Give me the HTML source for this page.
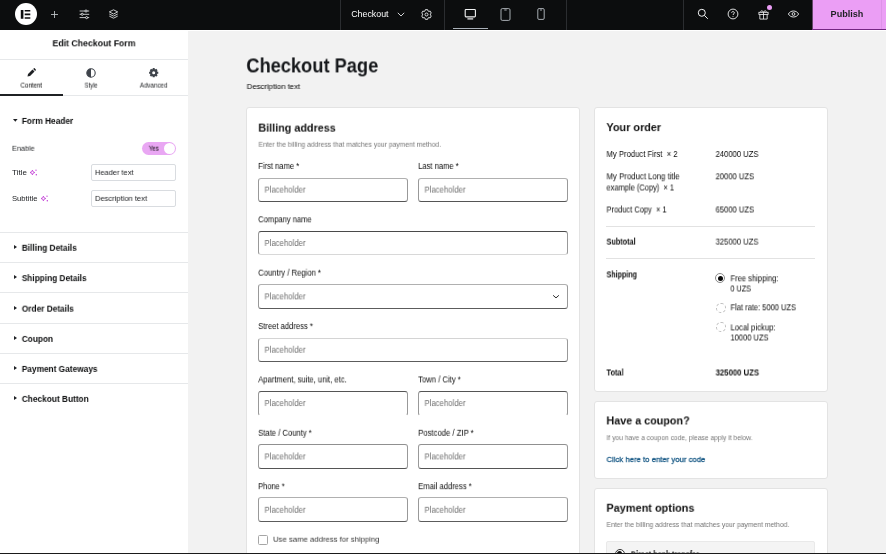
<!DOCTYPE html>
<html><head><meta charset="utf-8"><title>Checkout</title>
<style>
*{box-sizing:border-box;margin:0;padding:0}
html,body{width:886px;height:554px;overflow:hidden;background:#fff;font-family:"Liberation Sans",sans-serif;color:#1f2124}
.abs{position:absolute}
#top{position:absolute;left:0;top:0;width:886px;height:29.5px;background:#0c0d0e}
#panel{position:absolute;left:0;top:29.5px;width:188px;height:523px;background:#fff}
#preview{position:absolute;left:188px;top:30.6px;width:698px;height:522px;background:#f2f2f2}
#bottom{position:absolute;left:0;top:552.5px;width:886px;height:1.5px;background:#1a1a1a}
.t{position:absolute;white-space:nowrap;line-height:1;transform-origin:0 50%;will-change:transform}
.sep{position:absolute;top:0;width:1px;height:29.5px;background:#2b2d30}
.card{position:absolute;background:#fff;border:1px solid #e3e3e3;border-radius:3px}
.inp{position:absolute;border:1px solid #999;border-radius:3px;background:#fff}
.sec{position:absolute;left:0;width:188px;height:1px;background:#e6e8ea}
.hr{position:absolute;height:1px;background:#e2e2e2}
.tri{position:absolute;width:0;height:0;border-top:2.5px solid transparent;border-bottom:2.5px solid transparent;border-left:3px solid #1f2124}
.rad{position:absolute;width:10px;height:10px;border-radius:50%;border:1px solid #9a9a9a;background:#fff}
svg{position:absolute;overflow:visible}
</style></head><body>

<div id="preview"></div><div>
<div class="t" id="t1" style="left:246px;top:55px;font-size:20.30px;color:#15171a;font-weight:bold;transform:translate3d(0.30px,0.40px,0) scaleX(0.9009);">Checkout Page</div>
<div class="t" id="t2" style="left:246px;top:82px;font-size:7.80px;color:#000;transform:translate3d(0.70px,0.98px,0) scaleX(0.9938);">Description text</div>
<div class="card" style="left:246px;top:107.4px;width:334px;height:460px"></div>
<div class="t" id="t3" style="left:258px;top:121px;font-size:11.70px;color:#111;font-weight:bold;transform:translate3d(0.30px,0.62px,0) scaleX(0.9249);">Billing address</div>
<div class="t" id="t4" style="left:258px;top:140px;font-size:7.40px;color:#757575;transform:translate3d(0.50px,0.78px,0) scaleX(0.9164);">Enter the billing address that matches your payment method.</div>
<div class="t" id="t5" style="left:258px;top:161px;font-size:8.60px;color:#0a0a0a;transform:translate3d(0.20px,0.93px,0) scaleX(0.8850);">First name *</div>
<div class="inp" style="left:258px;top:178px;width:150px;height:24px;border-top-color:#b0b0b0;border-bottom-color:#555"></div>
<div class="t" id="t6" style="left:264px;top:185px;font-size:8.40px;color:#6e6e6e;transform:translate3d(0.50px,0.58px,0) scaleX(0.9269);">Placeholder</div>
<div class="t" id="t7" style="left:418px;top:161px;font-size:8.60px;color:#0a0a0a;transform:translate3d(0.20px,0.93px,0) scaleX(0.8828);">Last name *</div>
<div class="inp" style="left:418px;top:178px;width:150px;height:24px;border-top-color:#b0b0b0;border-bottom-color:#555"></div>
<div class="t" id="t8" style="left:424px;top:185px;font-size:8.40px;color:#6e6e6e;transform:translate3d(0.50px,0.58px,0) scaleX(0.9269);">Placeholder</div>
<div class="t" id="t9" style="left:258px;top:215px;font-size:8.60px;color:#0a0a0a;transform:translate3d(0.20px,0.30px,0) scaleX(0.8801);">Company name</div>
<div class="inp" style="left:258px;top:231px;width:310px;height:24px;border-top-color:#4a4a4a;border-bottom-color:#d8d8d8"></div>
<div class="t" id="t10" style="left:264px;top:238px;font-size:8.40px;color:#6e6e6e;transform:translate3d(0.50px,0.95px,0) scaleX(0.9269);">Placeholder</div>
<div class="t" id="t11" style="left:258px;top:268px;font-size:8.60px;color:#0a0a0a;transform:translate3d(0.20px,0.67px,0) scaleX(0.8943);">Country / Region *</div>
<div class="inp" style="left:258px;top:284px;width:310px;height:25px;border-top-color:#b0b0b0;border-bottom-color:#5c5c5c"></div>
<div class="t" id="t12" style="left:264px;top:292px;font-size:8.40px;color:#6e6e6e;transform:translate3d(0.50px,0.32px,0) scaleX(0.9269);">Placeholder</div>
<div class="t" id="t13" style="left:258px;top:322px;font-size:8.60px;color:#0a0a0a;transform:translate3d(0.20px,0.04px,0) scaleX(0.8876);">Street address *</div>
<div class="inp" style="left:258px;top:338px;width:310px;height:24px;border-top-color:#d4d4d4;border-bottom-color:#5c5c5c"></div>
<div class="t" id="t14" style="left:264px;top:345px;font-size:8.40px;color:#6e6e6e;transform:translate3d(0.50px,0.69px,0) scaleX(0.9269);">Placeholder</div>
<div class="t" id="t15" style="left:258px;top:375px;font-size:8.60px;color:#0a0a0a;transform:translate3d(0.20px,0.41px,0) scaleX(0.8864);">Apartment, suite, unit, etc.</div>
<div class="inp" style="left:258px;top:391px;width:150px;height:25px;border-top-color:#555;border-bottom-color:transparent"></div>
<div class="t" id="t16" style="left:264px;top:399px;font-size:8.40px;color:#6e6e6e;transform:translate3d(0.50px,0.06px,0) scaleX(0.9269);">Placeholder</div>
<div class="t" id="t17" style="left:418px;top:375px;font-size:8.60px;color:#0a0a0a;transform:translate3d(0.20px,0.41px,0) scaleX(0.8898);">Town / City *</div>
<div class="inp" style="left:418px;top:391px;width:150px;height:25px;border-top-color:#555;border-bottom-color:transparent"></div>
<div class="t" id="t18" style="left:424px;top:399px;font-size:8.40px;color:#6e6e6e;transform:translate3d(0.50px,0.06px,0) scaleX(0.9269);">Placeholder</div>
<div class="t" id="t19" style="left:258px;top:428px;font-size:8.60px;color:#0a0a0a;transform:translate3d(0.20px,0.78px,0) scaleX(0.8887);">State / County *</div>
<div class="inp" style="left:258px;top:444px;width:150px;height:25px;border-top-color:#909090;border-bottom-color:#555"></div>
<div class="t" id="t20" style="left:264px;top:452px;font-size:8.40px;color:#6e6e6e;transform:translate3d(0.50px,0.43px,0) scaleX(0.9269);">Placeholder</div>
<div class="t" id="t21" style="left:418px;top:428px;font-size:8.60px;color:#0a0a0a;transform:translate3d(0.20px,0.78px,0) scaleX(0.8958);">Postcode / ZIP *</div>
<div class="inp" style="left:418px;top:444px;width:150px;height:25px;border-top-color:#909090;border-bottom-color:#555"></div>
<div class="t" id="t22" style="left:424px;top:452px;font-size:8.40px;color:#6e6e6e;transform:translate3d(0.50px,0.43px,0) scaleX(0.9269);">Placeholder</div>
<div class="t" id="t23" style="left:258px;top:482px;font-size:8.60px;color:#0a0a0a;transform:translate3d(0.20px,0.15px,0) scaleX(0.8662);">Phone *</div>
<div class="inp" style="left:258px;top:497px;width:150px;height:25px;border-top-color:#b0b0b0;border-bottom-color:#5c5c5c"></div>
<div class="t" id="t24" style="left:264px;top:505px;font-size:8.40px;color:#6e6e6e;transform:translate3d(0.50px,0.80px,0) scaleX(0.9269);">Placeholder</div>
<div class="t" id="t25" style="left:418px;top:482px;font-size:8.60px;color:#0a0a0a;transform:translate3d(0.20px,0.15px,0) scaleX(0.8889);">Email address *</div>
<div class="inp" style="left:418px;top:497px;width:150px;height:25px;border-top-color:#b0b0b0;border-bottom-color:#5c5c5c"></div>
<div class="t" id="t26" style="left:424px;top:505px;font-size:8.40px;color:#6e6e6e;transform:translate3d(0.50px,0.80px,0) scaleX(0.9269);">Placeholder</div>
<svg style="left:552px;top:293.8px" width="8" height="6" viewBox="0 0 8 6"><path d="M1.1 1.3 L4 3.9 L6.9 1.3" fill="none" stroke="#222" stroke-width="0.95"/></svg>
<div class="abs" style="left:258px;top:534.8px;width:10px;height:10px;border:1px solid #a6a6a6;border-radius:1.5px;background:#fff"></div>
<div class="t" id="t27" style="left:273px;top:535px;font-size:8.10px;color:#333;transform:translate3d(0.00px,0.73px,0) scaleX(0.9545);">Use same address for shipping</div>
<div class="card" style="left:594px;top:107.4px;width:234px;height:284.2px"></div>
<div class="t" id="t28" style="left:606px;top:121px;font-size:11.70px;color:#111;font-weight:bold;transform:translate3d(0.40px,0.12px,0) scaleX(0.9288);">Your order</div>
<div class="t" id="t29" style="left:606px;top:150px;font-size:8.20px;color:#0a0a0a;transform:translate3d(0.50px,0.98px,0) scaleX(0.9371);">My Product First &nbsp;× 2</div>
<div class="t" id="t30" style="left:715px;top:150px;font-size:8.20px;color:#0a0a0a;transform:translate3d(0.60px,0.98px,0) scaleX(0.9329);">240000 UZS</div>
<div class="t" id="t31" style="left:606px;top:173px;font-size:8.20px;color:#0a0a0a;transform:translate3d(0.50px,0.28px,0) scaleX(0.9516);">My Product Long title</div>
<div class="t" id="t32" style="left:606px;top:184px;font-size:8.20px;color:#0a0a0a;transform:translate3d(0.50px,0.48px,0) scaleX(0.9127);">example (Copy) &nbsp;× 1</div>
<div class="t" id="t33" style="left:715px;top:173px;font-size:8.20px;color:#0a0a0a;transform:translate3d(0.60px,0.28px,0) scaleX(0.9295);">20000 UZS</div>
<div class="t" id="t34" style="left:606px;top:206px;font-size:8.20px;color:#0a0a0a;transform:translate3d(0.50px,0.48px,0) scaleX(0.9123);">Product Copy &nbsp;× 1</div>
<div class="t" id="t35" style="left:715px;top:206px;font-size:8.20px;color:#0a0a0a;transform:translate3d(0.60px,0.48px,0) scaleX(0.9295);">65000 UZS</div>
<div class="hr" style="left:606px;top:226px;width:209px"></div>
<div class="t" id="t36" style="left:606px;top:238px;font-size:8.20px;color:#0a0a0a;font-weight:bold;transform:translate3d(0.50px,0.58px,0) scaleX(0.8855);">Subtotal</div>
<div class="t" id="t37" style="left:715px;top:238px;font-size:8.20px;color:#111;transform:translate3d(0.60px,0.58px,0) scaleX(0.9329);">325000 UZS</div>
<div class="hr" style="left:606px;top:258px;width:209px"></div>
<div class="t" id="t38" style="left:606px;top:271px;font-size:8.20px;color:#0a0a0a;font-weight:bold;transform:translate3d(0.50px,0.38px,0) scaleX(0.8707);">Shipping</div>
<div class="rad" style="left:715.2px;top:273.3px;border-color:#8a8a8a"></div>
<div class="abs" style="left:717.6px;top:275.7px;width:5.2px;height:5.2px;border-radius:50%;background:#0a0a0a"></div>
<div class="t" id="t39" style="left:730px;top:275px;font-size:8.20px;color:#0a0a0a;transform:translate3d(0.50px,0.28px,0) scaleX(0.9250);">Free shipping:</div>
<div class="t" id="t40" style="left:730px;top:285px;font-size:8.20px;color:#0a0a0a;transform:translate3d(0.50px,0.48px,0) scaleX(0.8829);">0 UZS</div>
<div class="rad" style="left:715.5px;top:302.6px;border-style:dashed;border-color:#bdbdbd"></div>
<div class="t" id="t41" style="left:730px;top:304px;font-size:8.20px;color:#0a0a0a;transform:translate3d(0.50px,0.28px,0) scaleX(0.9167);">Flat rate: 5000 UZS</div>
<div class="rad" style="left:715.5px;top:322.2px;border-style:dashed;border-color:#bdbdbd"></div>
<div class="t" id="t42" style="left:730px;top:324px;font-size:8.20px;color:#0a0a0a;transform:translate3d(0.50px,0.38px,0) scaleX(0.9415);">Local pickup:</div>
<div class="t" id="t43" style="left:730px;top:334px;font-size:8.20px;color:#0a0a0a;transform:translate3d(0.50px,0.48px,0) scaleX(0.9174);">10000 UZS</div>
<div class="t" id="t44" style="left:606px;top:369px;font-size:8.20px;color:#0a0a0a;font-weight:bold;transform:translate3d(0.50px,0.48px,0) scaleX(0.8969);">Total</div>
<div class="t" id="t45" style="left:715px;top:369px;font-size:8.20px;color:#111;font-weight:bold;transform:translate3d(0.60px,0.48px,0) scaleX(0.9460);">325000 UZS</div>
<div class="card" style="left:594px;top:401px;width:234px;height:78px"></div>
<div class="t" id="t46" style="left:606px;top:414px;font-size:11.70px;color:#111;font-weight:bold;transform:translate3d(0.40px,0.42px,0) scaleX(0.9216);">Have a coupon?</div>
<div class="t" id="t47" style="left:606px;top:434px;font-size:7.40px;color:#757575;transform:translate3d(0.50px,0.08px,0) scaleX(0.9064);">If you have a coupon code, please apply it below.</div>
<div class="t" id="t48" style="left:606px;top:455px;font-size:8.00px;color:#1c5c88;transform:translate3d(0.50px,0.98px,0) scaleX(0.9660);-webkit-text-stroke:0.3px #1c5c88;">Click here to enter your code</div>
<div class="card" style="left:594px;top:487.5px;width:234px;height:90px"></div>
<div class="t" id="t49" style="left:606px;top:501px;font-size:11.70px;color:#111;font-weight:bold;transform:translate3d(0.40px,0.72px,0) scaleX(0.9345);">Payment options</div>
<div class="t" id="t50" style="left:606px;top:520px;font-size:7.40px;color:#757575;transform:translate3d(0.50px,0.98px,0) scaleX(0.9174);">Enter the billing address that matches your payment method.</div>
<div class="abs" style="left:606px;top:541px;width:209px;height:30px;background:#f4f4f4;border:1px solid #e9e9e9;border-radius:2px"></div>
<div class="rad" style="left:614.5px;top:548.5px;border-color:#333"></div>
<div class="abs" style="left:617px;top:551px;width:5px;height:5px;border-radius:50%;background:#111"></div>
<div class="t" id="t51" style="left:630px;top:551px;font-size:8.20px;color:#111;font-weight:bold;transform:translate3d(0.80px,0.38px,0) scaleX(0.8790);">Direct bank transfer</div>
</div>
<div id="top">
<div class="abs" style="left:14.7px;top:3px;width:22.4px;height:22.4px;border-radius:50%;background:#fff"></div>
<svg style="left:20px;top:9px" width="12" height="11" viewBox="0 0 12 11"><path d="M0.8 1H3.4V9.8H0.8Z M4.7 1H10.3V2.6H4.7Z M4.7 4.6H10.3V6.2H4.7Z M4.7 8.2H10.3V9.8H4.7Z" fill="#0c0d0e"/></svg>
<svg style="left:50.1px;top:9.8px" width="9" height="9" viewBox="0 0 9 9"><path d="M4.5 1V8M1 4.5H8" stroke="#c4c7cb" stroke-width="0.85" fill="none"/></svg>
<svg style="left:78.6px;top:9px" width="11" height="11" viewBox="0 0 11 11"><g stroke="#e6e8ea" stroke-width="0.85" fill="#0c0d0e"><path d="M0.6 2H10.2M0.6 5.3H10.2M0.6 8.6H10.2"/><circle cx="7" cy="2" r="1.05"/><circle cx="3.2" cy="5.3" r="1.05"/><circle cx="7.6" cy="8.6" r="1.05"/></g></svg>
<svg style="left:107.8px;top:9.2px" width="11" height="10" viewBox="0 0 11 10"><g stroke="#e6e8ea" stroke-width="0.85" fill="none" stroke-linejoin="round"><path d="M5.5 0.8 L9.7 2.9 L5.5 5 L1.3 2.9 Z"/><path d="M1.3 5 L5.5 7.1 L9.7 5"/><path d="M1.3 7.1 L5.5 9.2 L9.7 7.1"/></g></svg>
<div class="sep" style="left:340px"></div>
<div class="sep" style="left:444px"></div>
<div class="sep" style="left:566px"></div>
<div class="sep" style="left:683px"></div>
<div class="t" id="t52" style="left:351px;top:9px;font-size:8.80px;color:#fff;transform:translate3d(0.20px,0.78px,0) scaleX(1.0034);">Checkout</div>
<svg style="left:397px;top:12px" width="8" height="5" viewBox="0 0 8 5"><path d="M0.8 0.8 L4 4 L7.2 0.8" fill="none" stroke="#e6e8ea" stroke-width="0.9"/></svg>
<svg style="left:420.9px;top:8.9px" width="11" height="11" viewBox="0 0 11 11"><g fill="none" stroke="#eceef0" stroke-width="0.9" stroke-linejoin="round"><circle cx="5.5" cy="5.5" r="1.5"/><path d="M4.38 0.63 L6.62 0.63 L6.96 1.88 L7.90 2.43 L9.16 2.09 L10.28 4.04 L9.36 4.96 L9.36 6.04 L10.28 6.96 L9.16 8.91 L7.90 8.57 L6.96 9.12 L6.62 10.37 L4.38 10.37 L4.04 9.12 L3.10 8.57 L1.84 8.91 L0.72 6.96 L1.64 6.04 L1.64 4.96 L0.72 4.04 L1.84 2.09 L3.10 2.43 L4.04 1.88 Z"/></g></svg>
<svg style="left:464px;top:8px" width="13" height="12" viewBox="0 0 13 12"><g fill="none" stroke="#f2f3f4" stroke-width="1.1"><rect x="1.2" y="1.5" width="10.2" height="7.4" rx="0.8"/><path d="M3.4 10.9H9.2" stroke-width="1.2"/></g></svg>
<svg style="left:500px;top:7.5px" width="11" height="13" viewBox="0 0 11 13"><g fill="none" stroke="#b9bec4" stroke-width="0.9"><rect x="1" y="0.6" width="9" height="11.8" rx="1.3"/><path d="M4.3 2H6.7"/></g></svg>
<svg style="left:537px;top:8px" width="8" height="12" viewBox="0 0 8 12"><g fill="none" stroke="#b9bec4" stroke-width="0.9"><rect x="0.8" y="0.6" width="6.4" height="10.8" rx="1.2"/><path d="M3 2H5"/></g></svg>
<div class="abs" style="left:453px;top:27.5px;width:35px;height:1.5px;background:#aab1b9"></div>
<svg style="left:697px;top:8px" width="12" height="12" viewBox="0 0 12 12"><g fill="none" stroke="#f2f3f4" stroke-width="1"><circle cx="4.8" cy="4.8" r="3.5"/><path d="M7.4 7.4 L10.8 10.8"/></g></svg>
<svg style="left:727px;top:7.8px" width="12" height="12" viewBox="0 0 12 12"><g fill="none" stroke="#f2f3f4" stroke-width="0.9"><circle cx="6" cy="6" r="4.9"/><path d="M4.6 4.7 C4.6 3.2 7.4 3.2 7.4 4.8 C7.4 5.8 6 5.9 6 7"/><path d="M6 8.2V9"/></g></svg>
<svg style="left:758px;top:8.6px" width="11" height="11" viewBox="0 0 12 12"><g fill="none" stroke="#f2f3f4" stroke-width="0.9"><rect x="1" y="3.6" width="10" height="2.4"/><path d="M2 6V11H10V6M6 3.6V11"/><path d="M6 3.6 C4.5 0.4 2 2.4 3.6 3.6M6 3.6 C7.5 0.4 10 2.4 8.4 3.6"/></g></svg>
<div class="abs" style="left:766.5px;top:5px;width:5px;height:5px;border-radius:50%;background:#eb9ef5"></div>
<svg style="left:787.2px;top:9.2px" width="13" height="10" viewBox="0 0 13 10"><g fill="none" stroke="#f2f3f4" stroke-width="0.9"><path d="M1.4 5 C3.4 1 9.6 1 11.6 5 C9.6 9 3.4 9 1.4 5 Z"/><circle cx="6.5" cy="5" r="1.4"/></g></svg>
<div class="abs" style="left:813px;top:0;width:73px;height:29.1px;background:#eb9ef5"></div>
<div class="abs" style="left:812px;top:0;width:1px;height:29.1px;background:#eb9ef5;opacity:0.4"></div>
<div class="abs" style="left:881px;top:0;width:1px;height:29.1px;background:#dd93e8"></div>
<div class="abs" style="left:812.3px;top:29px;width:74px;height:0.5px;background:#742683"></div>
<div class="t" id="t53" style="left:830px;top:9px;font-size:8.80px;color:#1f2124;font-weight:bold;transform:translate3d(0.60px,0.78px,0) scaleX(1.0321);">Publish</div>
</div>
<div id="panel"></div>
<div class="t" id="t54" style="left:52px;top:38px;font-size:9.40px;color:#0c0d0e;font-weight:bold;transform:translate3d(0.50px,0.28px,0) scaleX(0.9318);">Edit Checkout Form</div>
<div class="sec" style="top:59px"></div>
<svg style="left:26.6px;top:68.2px" width="10" height="9" viewBox="0 0 10 9"><path d="M0.5 8.6 L1 6.1 L5.5 1.6 L7.5 3.6 L3 8.1 Z M6.2 0.9 L6.9 0.2 Q7.3 -0.1 7.7 0.3 L8.8 1.4 Q9.1 1.8 8.8 2.2 L8.1 2.9 Z" fill="#1f2124"/></svg>
<svg style="left:86px;top:67.8px" width="10" height="10" viewBox="0 0 10 10"><circle cx="5" cy="5" r="4.2" fill="none" stroke="#3f444b" stroke-width="1.1"/><path d="M5 0.8 A4.2 4.2 0 0 0 5 9.2 Z" fill="#3f444b"/></svg>
<svg style="left:148.6px;top:68px" width="9.4" height="9.4" viewBox="0 0 9 9"><circle cx="4.5" cy="4.5" r="2.5" fill="none" stroke="#3f444b" stroke-width="2.1"/><g stroke="#3f444b" stroke-width="1.9"><path d="M4.5 0.1V1.6M4.5 7.4V8.9M0.1 4.5H1.6M7.4 4.5H8.9M1.4 1.4L2.4 2.4M6.6 6.6L7.6 7.6M1.4 7.6L2.4 6.6M6.6 2.4L7.6 1.4"/></g></svg>
<div class="t" id="t55" style="left:20px;top:82px;font-size:6.60px;color:#000;transform:translate3d(0.50px,0.58px,0) scaleX(0.9347);">Content</div>
<div class="t" id="t56" style="left:84px;top:82px;font-size:6.60px;color:#1a1c1f;transform:translate3d(0.60px,0.58px,0) scaleX(0.8860);">Style</div>
<div class="t" id="t57" style="left:139px;top:82px;font-size:6.60px;color:#1a1c1f;transform:translate3d(0.80px,0.58px,0) scaleX(0.9411);">Advanced</div>
<div class="sec" style="top:95.4px"></div>
<div class="abs" style="left:0;top:93.6px;width:63px;height:2px;background:#1f2124"></div>
<svg style="left:12.8px;top:119.4px" width="5" height="3" viewBox="0 0 5 3"><path d="M0 0H4.6L2.3 2.8Z" fill="#1f2124"/></svg>
<div class="t" id="t58" style="left:21px;top:116px;font-size:8.80px;color:#0c0d0e;font-weight:bold;transform:translate3d(0.80px,0.88px,0) scaleX(0.9490);">Form Header</div>
<div class="t" id="t59" style="left:12px;top:144px;font-size:7.40px;color:#191b1e;transform:translate3d(0.00px,0.78px,0) scaleX(0.9776);">Enable</div>
<div class="abs" style="left:142px;top:142px;width:34px;height:13px;border-radius:7px;background:#e9a7f3"></div>
<div class="abs" style="left:164px;top:143px;width:11px;height:11px;border-radius:50%;background:#fff"></div>
<div class="t" id="t60" style="left:148px;top:145px;font-size:6.60px;color:#000;transform:translate3d(0.80px,0.68px,0) scaleX(0.9289);">Yes</div>
<div class="t" id="t61" style="left:12px;top:168px;font-size:7.60px;color:#191b1e;transform:translate3d(0.00px,0.88px,0) scaleX(1.0584);">Title</div>
<div class="t" id="t62" style="left:12px;top:194px;font-size:7.60px;color:#191b1e;transform:translate3d(0.00px,0.88px,0) scaleX(1.0062);">Subtitle</div>
<svg style="left:30.1px;top:168.7px" width="8" height="7" viewBox="0 0 8 7"><path d="M2.4 1.1 L3.1 2.8 L4.8 3.5 L3.1 4.2 L2.4 5.9 L1.7 4.2 L0 3.5 L1.7 2.8 Z" fill="none" stroke="#bf35d4" stroke-width="0.8" stroke-linejoin="round"/><circle cx="6" cy="1.2" r="0.65" fill="#bf35d4"/><circle cx="6.3" cy="5.8" r="0.7" fill="#bf35d4"/></svg>
<svg style="left:41.4px;top:194.8px" width="8" height="7" viewBox="0 0 8 7"><path d="M2.4 1.1 L3.1 2.8 L4.8 3.5 L3.1 4.2 L2.4 5.9 L1.7 4.2 L0 3.5 L1.7 2.8 Z" fill="none" stroke="#bf35d4" stroke-width="0.8" stroke-linejoin="round"/><circle cx="6" cy="1.2" r="0.65" fill="#bf35d4"/><circle cx="6.3" cy="5.8" r="0.7" fill="#bf35d4"/></svg>
<div class="abs" style="left:91px;top:164px;width:85px;height:16.5px;border:1px solid #d9dce0;border-radius:2px"></div>
<div class="abs" style="left:91px;top:190px;width:85px;height:16.5px;border:1px solid #d9dce0;border-radius:2px"></div>
<div class="t" id="t63" style="left:95px;top:168px;font-size:7.90px;color:#191b1e;transform:translate3d(0.00px,0.93px,0) scaleX(0.9437);">Header text</div>
<div class="t" id="t64" style="left:95px;top:194px;font-size:7.90px;color:#191b1e;transform:translate3d(0.00px,0.93px,0) scaleX(0.9560);">Description text</div>
<div class="sec" style="top:232px"></div>
<div class="tri" style="left:14px;top:244.9px"></div>
<div class="t" id="t65" style="left:21px;top:243px;font-size:8.80px;color:#0c0d0e;font-weight:bold;transform:translate3d(0.80px,0.78px,0) scaleX(0.9455);">Billing Details</div>
<div class="sec" style="top:262px"></div>
<div class="tri" style="left:14px;top:275.2px"></div>
<div class="t" id="t66" style="left:21px;top:274px;font-size:8.80px;color:#0c0d0e;font-weight:bold;transform:translate3d(0.80px,0.08px,0) scaleX(0.9402);">Shipping Details</div>
<div class="sec" style="top:292px"></div>
<div class="tri" style="left:14px;top:305.8px"></div>
<div class="t" id="t67" style="left:21px;top:304px;font-size:8.80px;color:#0c0d0e;font-weight:bold;transform:translate3d(0.80px,0.68px,0) scaleX(0.9412);">Order Details</div>
<div class="sec" style="top:323px"></div>
<div class="tri" style="left:14px;top:336px"></div>
<div class="t" id="t68" style="left:21px;top:334px;font-size:8.80px;color:#0c0d0e;font-weight:bold;transform:translate3d(0.80px,0.88px,0) scaleX(0.9418);">Coupon</div>
<div class="sec" style="top:353px"></div>
<div class="tri" style="left:14px;top:366px"></div>
<div class="t" id="t69" style="left:21px;top:364px;font-size:8.80px;color:#0c0d0e;font-weight:bold;transform:translate3d(0.80px,0.88px,0) scaleX(0.9439);">Payment Gateways</div>
<div class="sec" style="top:383px"></div>
<div class="tri" style="left:14px;top:396px"></div>
<div class="t" id="t70" style="left:21px;top:394px;font-size:8.80px;color:#0c0d0e;font-weight:bold;transform:translate3d(0.80px,0.88px,0) scaleX(0.9441);">Checkout Button</div>
<div id="bottom"></div>
</body></html>
